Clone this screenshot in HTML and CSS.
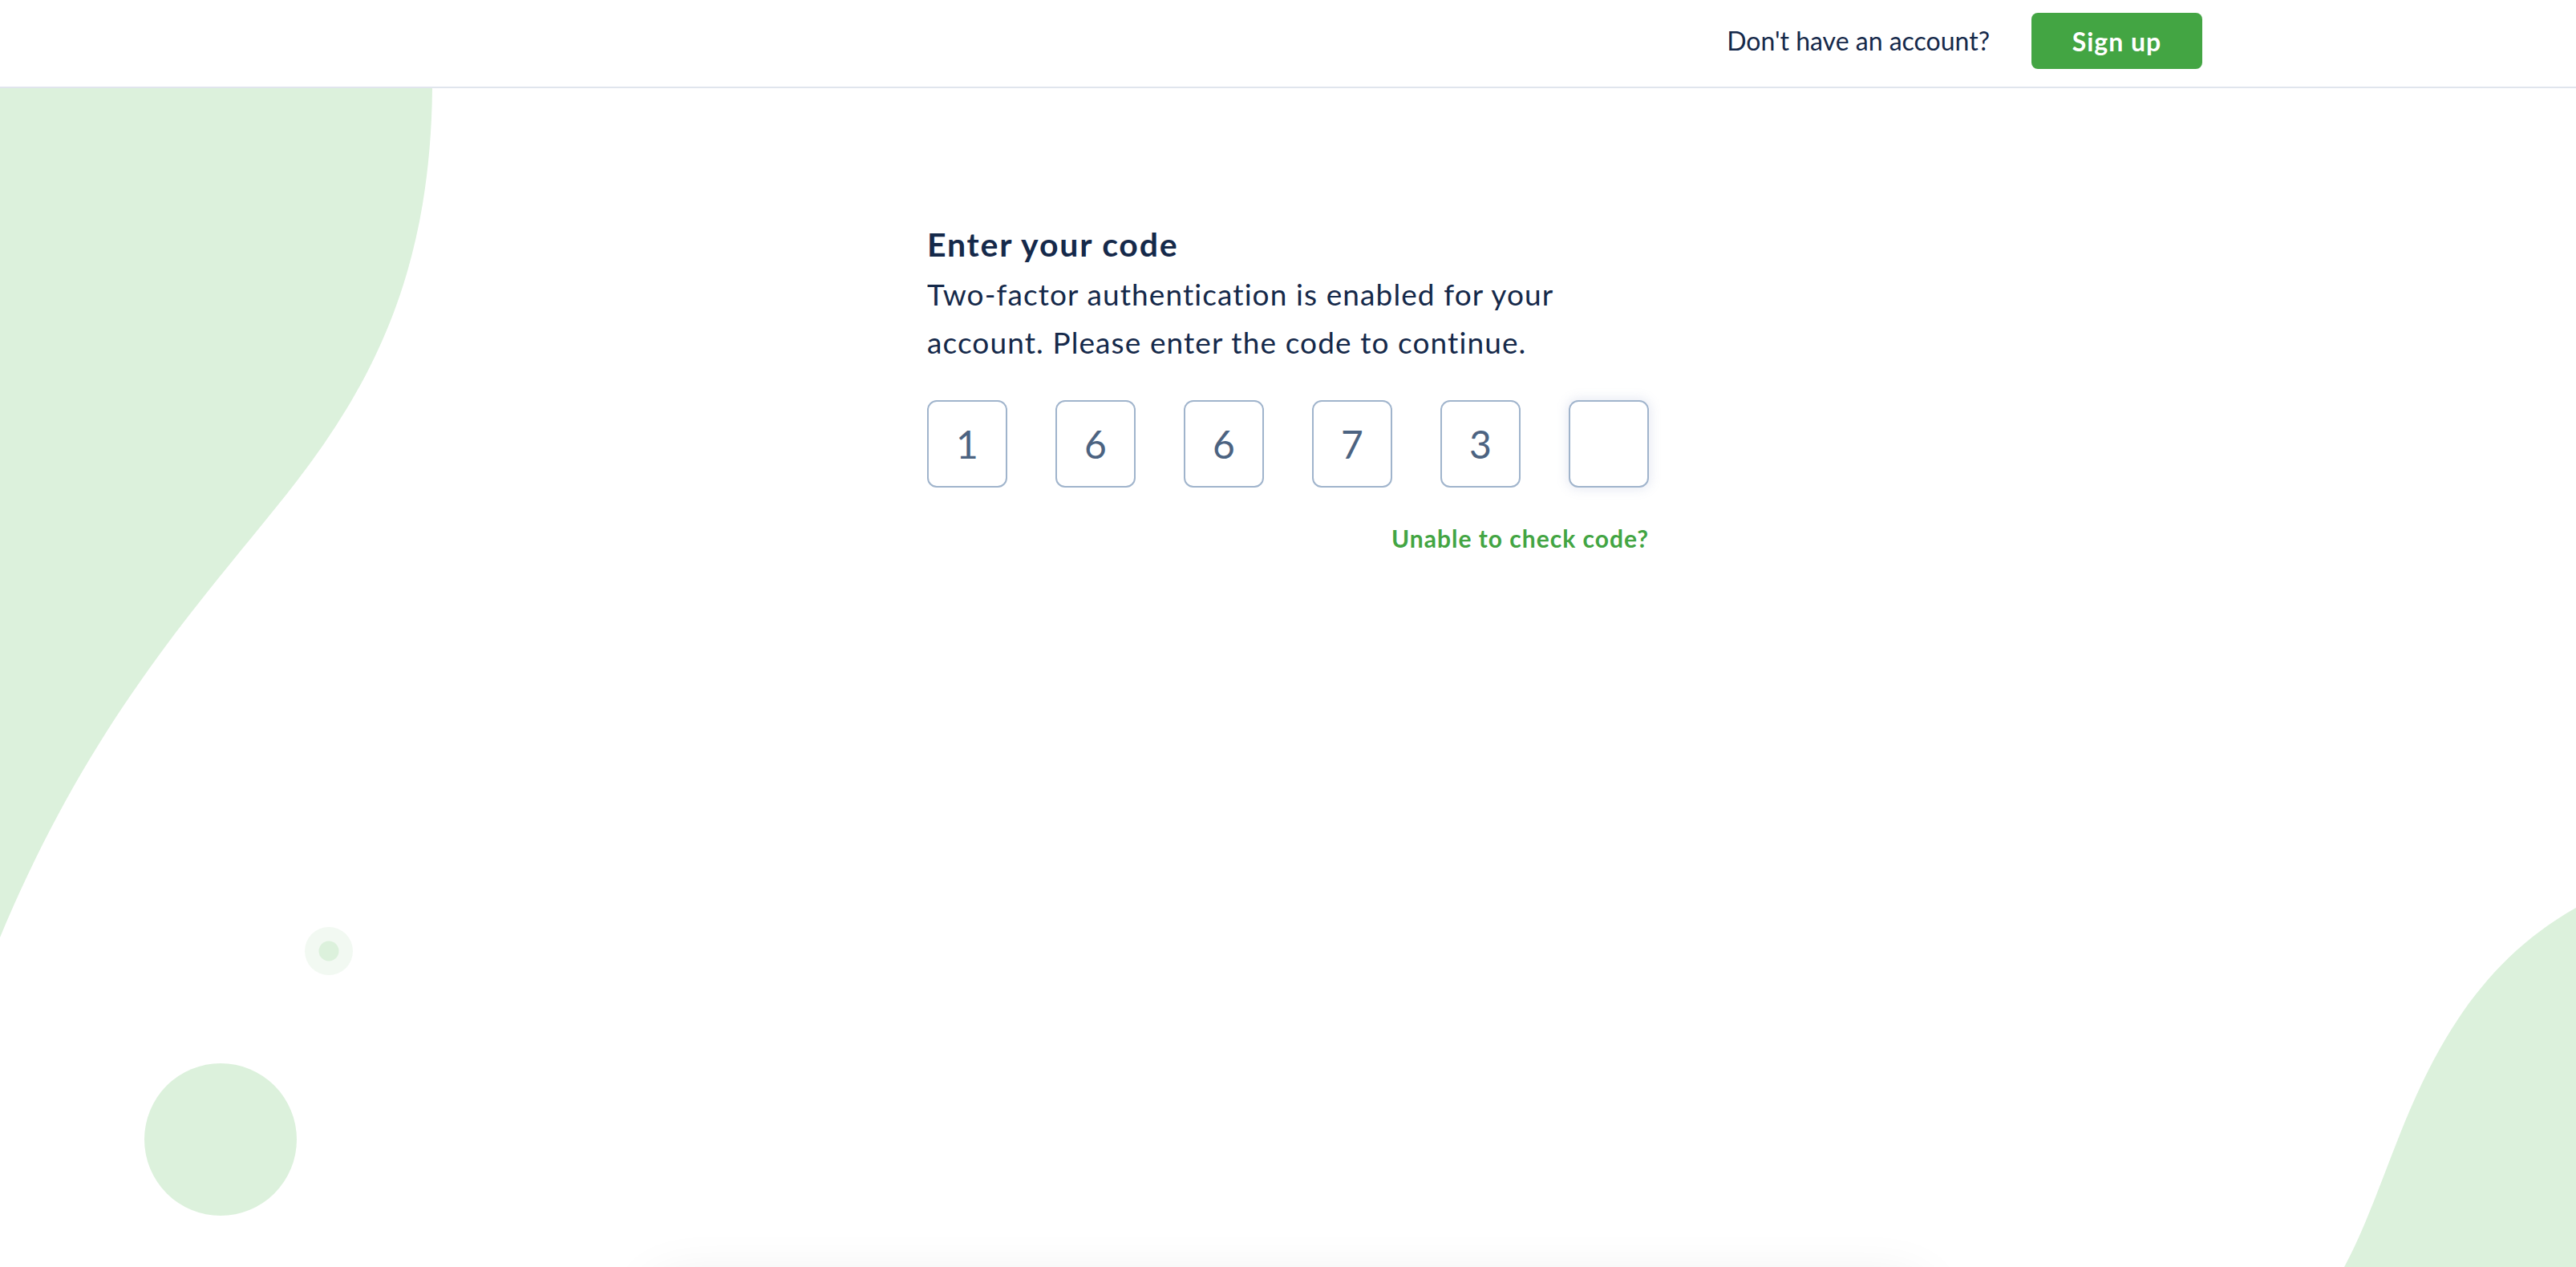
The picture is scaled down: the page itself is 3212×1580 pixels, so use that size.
FILE: index.html
```html
<!DOCTYPE html>
<html lang="en">
<head>
<meta charset="utf-8">
<title>Enter your code</title>
<link rel="stylesheet" href="styles.css">
</head>
<body>
<svg class="decor" viewBox="0 0 3212 1580" preserveAspectRatio="none" aria-hidden="true">
  <path class="blob" d="M0 110 H539 C537 330 470 470 370 600 C270 730 120 880 0 1169 Z"/>
  <path class="blob" d="M3212 1132 C3102 1194 3041 1292 2993 1413 C2970 1470 2950 1530 2923 1580 L3212 1580 Z"/>
  <circle class="ring" cx="410" cy="1186" r="30"/>
  <circle class="blob" cx="410" cy="1186" r="12.5"/>
  <circle class="blob" cx="275" cy="1421" r="95"/>
</svg>
<header class="topbar">
  <div class="topbar-inner">
    <span class="topbar-text">Don't have an account?</span>
    <a class="btn-signup" href="#">Sign up</a>
  </div>
</header>
<main class="main">
  <section class="code-form">
    <h1 class="title">Enter your code</h1>
    <p class="lead">Two-factor authentication is enabled for your account. Please enter the code to continue.</p>
    <div class="digits">
      <div class="digit">1</div>
      <div class="digit">6</div>
      <div class="digit">6</div>
      <div class="digit">7</div>
      <div class="digit">3</div>
      <div class="digit digit-focus"></div>
    </div>
    <div class="help-row">
      <a class="help-link" href="#">Unable to check code?</a>
    </div>
  </section>
</main>
<footer class="below-card"></footer>
</body>
</html>
```

FILE: styles.css
```css
html, body {
  margin: 0;
  padding: 0;
}

body {
  position: relative;
  background: #ffffff;
  font-family: "Lato", "Noto Sans", sans-serif;
  color: #15294a;
  overflow: hidden;
  height: 1580px;
}

.decor {
  position: absolute;
  top: 0;
  left: 0;
  width: 100%;
  height: 1580px;
  z-index: 0;
  pointer-events: none;
}

.blob {
  fill: #dcf1dc;
}

.ring {
  fill: #f2f9f2;
}

.topbar {
  position: relative;
  z-index: 2;
  background: #ffffff;
  border-bottom: 2px solid #e0e5ed;
  height: 110px;
  box-sizing: border-box;
}

.topbar-inner {
  width: 2280px;
  margin: 0 auto;
  height: 100%;
  display: flex;
  justify-content: flex-end;
  align-items: flex-start;
  padding-top: 16px;
  box-sizing: border-box;
  gap: 52px;
}

.topbar-text {
  font-size: 32px;
  line-height: 70px;
  color: #15294a;
}

.btn-signup {
  display: inline-flex;
  align-items: center;
  justify-content: center;
  width: 213px;
  height: 70px;
  background: #43a543;
  color: #ffffff;
  font-weight: 700;
  font-size: 32px;
  letter-spacing: 1px;
  text-decoration: none;
  border-radius: 8px;
}

.main {
  position: relative;
  z-index: 1;
  height: 1490px;
  display: flex;
  justify-content: center;
}

.code-form {
  width: 900px;
  padding-top: 171px;
}

.title {
  margin: 0;
  font-size: 41px;
  line-height: 48px;
  font-weight: 700;
  letter-spacing: 1.8px;
  color: #15294a;
}

.lead {
  margin: 8px 0 0;
  font-size: 37px;
  line-height: 60px;
  font-weight: 400;
  letter-spacing: 1.1px;
  color: #15294a;
}

.digits {
  margin-top: 42px;
  display: flex;
  gap: 60px;
}

.digit {
  width: 100px;
  height: 109px;
  box-sizing: border-box;
  border: 2px solid #a0b4cc;
  border-radius: 12px;
  background: #ffffff;
  display: flex;
  align-items: center;
  justify-content: center;
  font-size: 48px;
  color: #4c6381;
  font-weight: 400;
}

.digit-focus {
  box-shadow: 0 0 14px 2px rgba(120, 140, 190, 0.18);
}

.help-row {
  margin-top: 45px;
  display: flex;
  justify-content: flex-end;
}

.help-link {
  font-size: 30px;
  line-height: 36px;
  font-weight: 700;
  letter-spacing: 1px;
  color: #43a543;
  text-decoration: none;
}

.below-card {
  position: relative;
  z-index: 1;
  width: 1580px;
  height: 400px;
  margin: 0 auto;
  background: #ffffff;
  box-shadow: 0 0 70px rgba(0, 0, 0, 0.09);
  border-radius: 16px;
}
```
